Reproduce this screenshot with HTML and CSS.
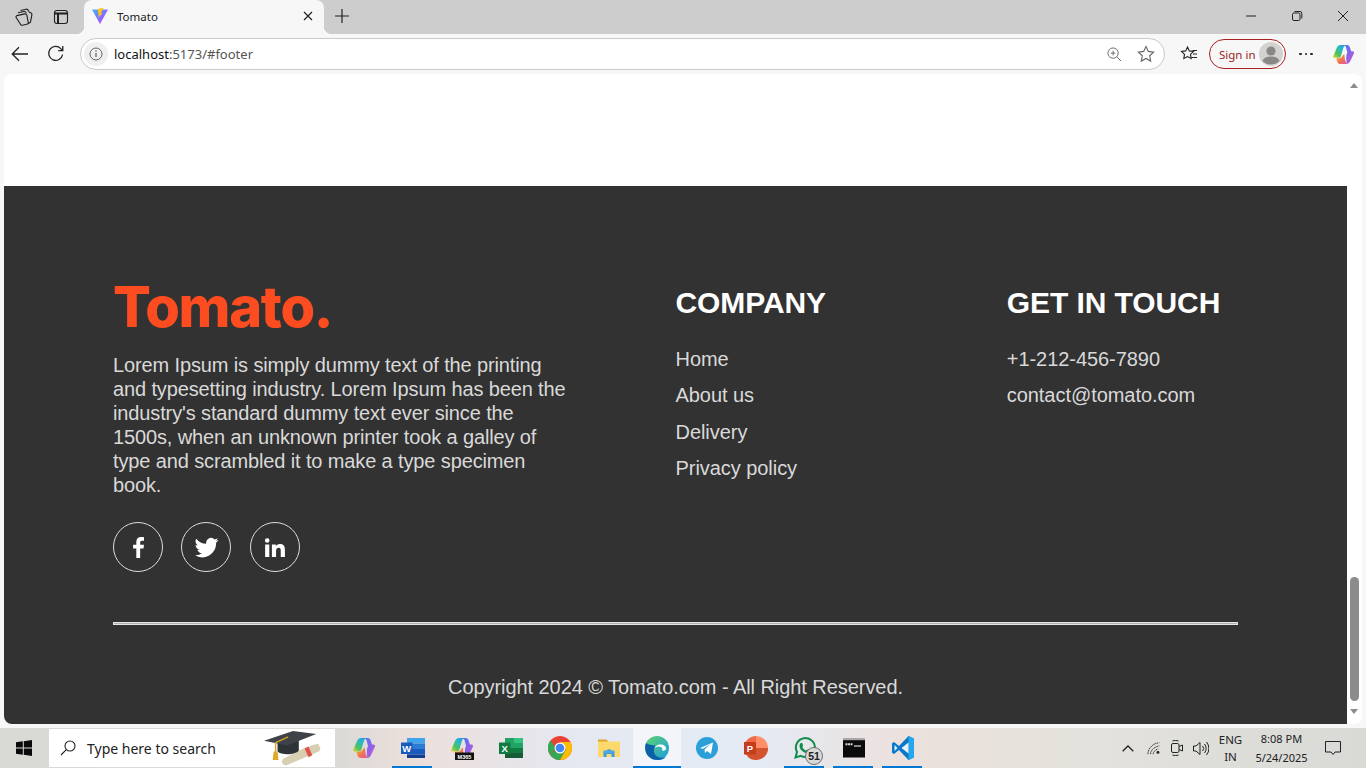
FILE: index.html
```html
<!DOCTYPE html>
<html lang="en">
<head>
<meta charset="utf-8">
<title>Tomato</title>
<link rel="stylesheet" href="styles.css">
</head>
<body>
<div class="screen">
  <header class="tabstrip">
    <div class="tab-tools">
      <svg class="ico" viewBox="0 0 18 18"><path d="M5.500 2.500 11 1.200a2 2 0 0 1 2.300 1.300l.3 1M3 4.800 9 3.500a2 2 0 0 1 2.300 1.400M1.800 7.600l8-1.700a1.800 1.800 0 0 1 2.100 1.400l1.300 7a1.800 1.800 0 0 1-1.400 2l-4.300.9a2 2 0 0 1-2.200-1.200L1.300 9.800a1.600 1.600 0 0 1 .5-2.200Z"/><path d="M13.800 3.800l2.300 1.100a1.500 1.500 0 0 1 .8 1.700l-1.400 7.600-2.300 1.600"/></svg>
      <svg class="ico" viewBox="0 0 18 18"><rect x="2.500" y="2.500" width="13" height="13" rx="2.500"/><path d="M3 5.500h12M6 5.500v10" stroke-width="2"/></svg>
    </div>
    <div class="tab">
      <svg class="favicon" viewBox="0 0 18 18"><defs><linearGradient id="v1" x1="0" y1="0" x2="1" y2="1"><stop offset="0" stop-color="#41b0ff"/><stop offset="1" stop-color="#bd34fe"/></linearGradient></defs><path d="M1 2.500 17 2.500 9 17Z" fill="url(#v1)"/><path d="M10.500 1 6.500 2.200 7.800 9 6.800 11 11.500 6.600 9.800 6.200 12.500 1Z" fill="#ffc517"/></svg>
      <span class="tab-title">Tomato</span>
      <svg class="tab-close" viewBox="0 0 10 10"><path d="M1 1l8 8M9 1 1 9"/></svg>
    </div>
    <svg class="new-tab" viewBox="0 0 14 14"><path d="M7 0v14M0 7h14"/></svg>
    <div class="win-controls">
      <svg class="win-btn" viewBox="0 0 12 12"><path d="M1 6h10"/></svg>
      <svg class="win-btn" viewBox="0 0 12 12"><rect x="1.500" y="3" width="7.500" height="7.500" rx="1.500"/><path d="M3.500 1.500h5.500a1.800 1.800 0 0 1 1.800 1.800V8.500"/></svg>
      <svg class="win-btn" viewBox="0 0 12 12"><path d="M1 1l10 10M11 1 1 11"/></svg>
    </div>
  </header>

  <nav class="toolbar">
    <svg class="nav-ico" viewBox="0 0 18 18"><path d="M17 9H1.500M8 2.200 1.200 9 8 15.800"/></svg>
    <svg class="nav-ico reload" viewBox="0 0 18 18"><path d="M15.600 9.500A7 7 0 1 1 13.800 3.600L15.600 5.400M15.800 1v4.600h-4.600"/></svg>
    <div class="omnibox">
      <span class="info-wrap"><svg class="info" viewBox="0 0 14 14"><circle cx="7" cy="7" r="6"/><path d="M7 6v4M7 3.600v1.200" stroke-width="1.300"/></svg></span>
      <span class="url"><span class="url-host">localhost</span>:5173/#footer</span>
      <svg class="zoom-ico" viewBox="0 0 16 16"><circle cx="6.500" cy="6.500" r="5.500"/><path d="M10.500 10.500 15 15M6.500 4v5M4 6.500h5"/></svg>
      <svg class="star-ico" viewBox="0 0 18 18"><path d="M9 1.500l2.300 4.900 5.300.7-3.900 3.700 1 5.300L9 13.500l-4.700 2.600 1-5.300L1.400 7.100l5.300-.7Z"/></svg>
    </div>
    <svg class="fav-ico" viewBox="0 0 18 18"><path d="M7.500 2l1.800 3.900 4.200.6-3 2.900.7 4.200L7.500 11.600l-3.700 2 .7-4.200-3-2.900 4.200-.6Z"/><path d="M12.500 5.500h4.500M13 9h4M11.500 12.500H17"/></svg>
    <div class="signin">
      <span class="signin-text">Sign in</span>
      <svg class="avatar" viewBox="0 0 24 24"><circle cx="12" cy="12" r="12" fill="#d4d2cf"/><circle cx="12" cy="9" r="4.600" fill="#8a8886"/><path d="M3.500 19c1.500-3.600 4.500-4.500 8.500-4.500s7 .9 8.500 4.500A12 12 0 0 1 3.500 19Z" fill="#8a8886"/></svg>
    </div>
    <div class="more"><i></i><i></i><i></i></div>
    <svg class="copilot-top" viewBox="0 0 24 24"><use href="#copilot"/></svg>
  </nav>

  <div class="window-body">
    <div class="page">
      <main class="viewport">
        <div class="blank"></div>
        <footer class="footer">
          <div class="footer-grid">
            <section class="brand">
              <div class="logo">Tomato.</div>
              <p class="about">Lorem Ipsum is simply dummy text of the printing and typesetting industry. Lorem Ipsum has been the industry's standard dummy text ever since the 1500s, when an unknown printer took a galley of type and scrambled it to make a type specimen book.</p>
              <div class="socials">
                <span class="social"><svg viewBox="0 0 24 24"><path d="M13.600 22v-9h3.200l.5-3.600h-3.700V7.200c0-1 .3-1.800 1.800-1.800h1.900V2.200c-.4 0-1.500-.2-2.800-.2-2.800 0-4.600 1.700-4.600 4.700v2.700H6.800V13h3.100v9Z"/></svg></span>
                <span class="social"><svg viewBox="0 0 24 24"><path d="M23.500 4.900c-.8.400-1.700.6-2.700.8 1-.6 1.700-1.500 2-2.600-.9.500-1.900.9-3 1.100a4.700 4.700 0 0 0-8 4.300A13.400 13.400 0 0 1 2.100 3.600a4.700 4.700 0 0 0 1.500 6.300c-.8 0-1.500-.2-2.100-.6 0 2.300 1.600 4.200 3.800 4.700-.7.200-1.400.2-2.100.1.600 1.900 2.300 3.200 4.400 3.300A9.500 9.500 0 0 1 .6 19.300a13.400 13.400 0 0 0 20.600-11.900c.9-.7 1.700-1.500 2.300-2.500Z"/></svg></span>
                <span class="social"><svg viewBox="0 0 24 24"><path d="M3 9h4v12H3ZM5 3a2.200 2.200 0 1 1 0 4.400A2.200 2.200 0 0 1 5 3ZM9.500 9h3.800v1.700c.6-1 1.900-2 3.900-2 4 0 4.800 2.600 4.800 6V21h-4v-5.600c0-1.400 0-3.100-1.900-3.100s-2.600 1.500-2.600 3V21h-4Z"/></svg></span>
              </div>
            </section>
            <section class="col">
              <h2>COMPANY</h2>
              <ul>
                <li>Home</li>
                <li>About us</li>
                <li>Delivery</li>
                <li>Privacy policy</li>
              </ul>
            </section>
            <section class="col">
              <h2>GET IN TOUCH</h2>
              <ul>
                <li>+1-212-456-7890</li>
                <li>contact@tomato.com</li>
              </ul>
            </section>
          </div>
          <hr class="rule">
          <p class="copyright">Copyright 2024 © Tomato.com - All Right Reserved.</p>
        </footer>
      </main>
      <aside class="scrollbar">
        <span class="arrow-up"></span>
        <span class="thumb"></span>
        <span class="arrow-down"></span>
      </aside>
    </div>
  </div>

  <div class="taskbar">
    <svg class="start" viewBox="0 0 16 16"><path d="M0 2.300 6.800 1.300V7.500H0ZM7.800 1.200 16 0V7.500H7.800ZM0 8.500H6.800V14.700L0 13.700ZM7.800 8.500H16V16L7.800 14.800Z"/></svg>
    <div class="search">
      <svg class="search-ico" viewBox="0 0 16 16"><circle cx="10" cy="6" r="5"/><path d="M6.300 9.700 1 15"/></svg>
      <span class="search-text">Type here to search</span>
      <svg class="grad" viewBox="0 0 60 36">
        <path d="M36 20c8-3 14-6 20-7l2 4c1 3-1 4-3 5L24 35c-2 1-4 0-5-2s0-4 2-5Z" fill="#d8cfb3"/>
        <path d="M42 18l4 9 4-2-4-9Z" fill="#e0524a"/>
        <path d="M14 11v10c4 4 18 4 22-1V10Z" fill="#2e3338"/>
        <path d="M0 10 30 0l24 3L24 15Z" fill="#3d4348"/>
        <path d="M25 6 12 12v10" fill="none" stroke="#d9a520" stroke-width="1.500"/>
        <path d="M10 21h4l1 9h-6Z" fill="#e0a92c"/>
      </svg>
    </div>
    <div class="pins">
      <span class="pin"><svg viewBox="0 0 24 24"><use href="#copilot"/></svg></span>
      <span class="pin open"><svg viewBox="0 0 24 24"><rect x="6" y="2" width="18" height="5.500" fill="#41a5ee"/><rect x="6" y="7.500" width="18" height="5.500" fill="#2b7cd3"/><rect x="6" y="13" width="18" height="5.500" fill="#185abd"/><rect x="6" y="18.500" width="18" height="3.500" fill="#103f91"/><rect x="0" y="6.500" width="11.500" height="11.500" fill="#185abd"/><text class="letter" x="5.700" y="15.800">W</text></svg></span>
      <span class="pin"><svg viewBox="0 0 24 24"><use href="#copilot"/><rect x="5" y="16.500" width="19" height="7.500" fill="#111"/><text class="m365" x="14.500" y="22.500">M365</text></svg></span>
      <span class="pin"><svg viewBox="0 0 24 24"><rect x="6" y="2" width="18" height="20" fill="#21a366"/><rect x="15" y="2" width="9" height="5" fill="#33c481"/><rect x="6" y="12" width="18" height="5" fill="#107c41"/><rect x="6" y="17" width="18" height="5" fill="#185c37"/><rect x="0" y="6.500" width="11.500" height="11.500" fill="#107c41"/><text class="letter" x="5.700" y="15.800">X</text></svg></span>
      <span class="pin"><svg viewBox="0 0 24 24"><circle cx="12" cy="12" r="12" fill="#ea4335"/><path d="M12 12 1.600 18A12 12 0 0 0 12 24l6-10Z" fill="#34a853"/><path d="M12 6h10.400A12 12 0 0 1 12 24l6-10.500Z" fill="#fbbc04"/><path d="M1.600 18A12 12 0 0 1 2.800 4.300L8 13Z" fill="#34a853"/><circle cx="12" cy="12" r="5.500" fill="#fff"/><circle cx="12" cy="12" r="4.300" fill="#4285f4"/></svg></span>
      <span class="pin"><svg viewBox="0 0 24 24"><path d="M1 3.500h8.500l2 2.500H1Z" fill="#e0a32e"/><rect x="1" y="5.500" width="22" height="15.500" fill="#fcd96b"/><path d="M6.500 21v-5l5.500-3 5.500 3v5h-3v-3h-5v3Z" fill="#3a9be0"/><rect x="6.500" y="14.500" width="11" height="2.500" fill="#4fa9ea"/></svg></span>
      <span class="pin active"><svg viewBox="0 0 24 24"><defs><linearGradient id="e1" x1="0" y1="0" x2="1" y2="1"><stop offset="0" stop-color="#5fd46a"/><stop offset="1" stop-color="#1b9de2"/></linearGradient></defs><circle cx="12" cy="12" r="12" fill="url(#e1)"/><path d="M1 7c-3 9 3 17 12 17 3 0 6-1 8-3-5 2-11 0-12-5-.6-3 1-5 3-6-4-1-8-1-11-3Z" fill="#0c5fa8"/><path d="M9.500 13c0-3 3-4.500 6-4.500 3.500 0 5.500 1.800 5.500 4 0 1.800-2 2.500-4 2 .6-1 .5-2.500-1-3.500-2.500-1.400-6.500 0-6.500 2Z" fill="#fff"/></svg></span>
      <span class="pin"><svg viewBox="0 0 24 24"><circle cx="12" cy="12" r="11" fill="#2a9fd8"/><path d="M5 12 18 6.500 16 18l-4-3-2 2-.5-3.500 6-5.500-7.500 4.700Z" fill="#fff"/></svg></span>
      <span class="pin"><svg viewBox="0 0 24 24"><path d="M12 12V0a12 12 0 0 1 12 12Z" fill="#ff8f6b"/><path d="M12 0A12 12 0 1 0 24 12H12Z" fill="#ed6c47"/><path d="M12 24A12 12 0 0 1 4 21V12h20A12 12 0 0 1 12 24Z" fill="#d35230"/><rect x="0" y="6" width="12" height="12.500" fill="#c43e1c"/><text class="letter" x="6" y="16">P</text></svg></span>
      <span class="pin wa"><svg viewBox="0 0 24 24"><path d="M2.500 21.500 4 16a9.500 9.500 0 1 1 3.700 3.800Z" fill="none" stroke="#128c4b" stroke-width="2"/><path d="M8.500 6.800c1 0 1.300 2.300 1.600 3 0 .7-1 1-.6 1.700a8 8 0 0 0 3.200 2.900c.8.300 1-.9 1.800-.8.700.2 2 1 2.500 1.300.2 1.400-1.200 2.300-2.600 2.300-4 0-7.900-4-7.900-7.200 0-1.500 1-3.200 2-3.200Z" fill="#128c4b"/></svg><span class="badge">51</span></span>
      <span class="pin open"><svg viewBox="0 0 24 24"><rect x="1" y="2" width="22" height="19.500" fill="#0b0b0b"/><rect x="1" y="2" width="22" height="2.200" fill="#a8a8a8"/><path d="M3.500 8.200h7" stroke="#ddd" stroke-width="2" stroke-dasharray="2 .6"/><path d="M12 10h7" stroke="#ddd" stroke-width="1.200"/></svg></span>
      <span class="pin open"><svg viewBox="0 0 24 24"><path d="M17.500 0 8 10 3 6 1 7.200v9.600L3 18l5-4 9.500 10L23 21.500V2.500Z" fill="#0a78c8"/><path d="M17.500 0 23 2.500v19L17.500 24Z" fill="#24a7ef"/><path d="M17.500 6.500 10.500 12l7 5.500Z" fill="#e9f0f6"/><path d="M3.500 9 6.500 12l-3 3Z" fill="#e9f0f6"/></svg></span>
    </div>
    <div class="tray">
      <svg class="tray-ico chevron" viewBox="0 0 12 7"><path d="M.7 6.300 6 1l5.300 5.300"/></svg>
      <svg class="tray-ico wifi" viewBox="0 0 16 16"><path d="M1 15C1.500 8 7 2.500 14 2M4 15c.5-4.800 4-8 10-9.500M7 15c.3-3 3-5.300 6-6" stroke-dasharray="2 .8"/><circle cx="12.500" cy="13" r="1.700" fill="#222" stroke="none"/></svg>
      <svg class="tray-ico cam" viewBox="0 0 12 16"><rect x=".5" y="3.500" width="7.500" height="9" rx="1.500"/><path d="M8 6.500 11.500 5v6L8 9.500M1.500 1c2-.7 4-.7 6 0M1.500 15c2 .7 4 .7 6 0"/></svg>
      <svg class="tray-ico vol" viewBox="0 0 16 15"><path d="M.5 5h2.500L7 1.500v12L3 10H.5ZM9.500 5a3.500 3.500 0 0 1 0 5M11.500 3a7 7 0 0 1 0 9M13.500 1a10 10 0 0 1 0 13"/></svg>
      <div class="lang"><span>ENG</span><span>IN</span></div>
      <div class="clock"><span>8:08 PM</span><span>5/24/2025</span></div>
      <svg class="tray-ico notif" viewBox="0 0 16 15"><path d="M.5.500h15v10.500h-5.500L8 13.500 6 11H.5Z"/></svg>
    </div>
  </div>
</div>

<svg class="defs" width="0" height="0">
  <defs>
    <linearGradient id="cp1" x1="1" y1="0" x2="0" y2="1"><stop offset="0" stop-color="#2f7ff0"/><stop offset=".35" stop-color="#25b9c9"/><stop offset=".7" stop-color="#4fc35a"/><stop offset="1" stop-color="#f2d530"/></linearGradient>
    <linearGradient id="cp2" x1="0" y1="0" x2="1" y2="1"><stop offset="0" stop-color="#3f7ff0"/><stop offset=".5" stop-color="#8a63ea"/><stop offset="1" stop-color="#dd55c4"/></linearGradient>
    <linearGradient id="cp3" x1="0" y1="0" x2="1" y2="1"><stop offset="0" stop-color="#f6c52c"/><stop offset=".5" stop-color="#f2794e"/><stop offset="1" stop-color="#e3509c"/></linearGradient>
    <g id="copilot">
      <path d="M15.500 2C17.500 2 18.300 3.200 18.800 5L20 8.500H21.500C23 8.500 23.400 9.700 22.800 10.900L19.500 18C18.500 20.500 17 22 15 22C16 21 13.500 15 16 10L15 6C14.700 4 14 3 12.500 2.600C13.500 2 14.500 2 15.500 2Z" fill="url(#cp2)"/>
      <path d="M4.500 15.800H7C9.500 15.800 10.500 14.500 11 13L13 11.500C13 17 14 19 15.500 22H9C7 22 6 21 5.300 19Z" fill="url(#cp3)"/>
      <path d="M9 2H15C13 2 12.300 3.500 11.700 5.500L9.500 13C9 15 8 15.500 6 15.500H2.500C1.500 15.500 1 14.700 1.300 13.700L5 5C6 3 7 2 9 2Z" fill="url(#cp1)"/>
    </g>
  </defs>
</svg>
</body>
</html>
```

FILE: styles.css
```css
* { box-sizing: border-box; }
html, body { margin: 0; padding: 0; height: 100%; overflow: hidden; }
body { font-family: "Liberation Sans", Arial, sans-serif; background: #f7f7f7; }
svg { display: block; flex: none; }
.defs { position: absolute; }
.screen { width: 1366px; height: 768px; display: flex; flex-direction: column; }

.tabstrip { height: 34px; background: #cdcdcd; display: flex; align-items: center; flex: none; }
.ico { width: 18px; height: 18px; fill: none; stroke: #1f1f1f; stroke-width: 1.100; }
.tab-tools { width: 84px; display: flex; gap: 19px; padding: 0 0 1px 15px; }
.tab { width: 240px; height: 34px; background: #f7f7f7; border-radius: 8px 8px 0 0; display: flex; align-items: center; padding: 0 11px 2px 7px; align-self: flex-end; position: relative; }
.tab::before, .tab::after { content: ""; position: absolute; bottom: 0; width: 8px; height: 8px; }
.tab::before { left: -8px; background: radial-gradient(circle at 0 0, #cdcdcd 8px, #f7f7f7 8.500px); }
.tab::after { right: -8px; background: radial-gradient(circle at 100% 0, #cdcdcd 8px, #f7f7f7 8.500px); }
.favicon { width: 18px; height: 18px; }
.tab-title { margin-left: 8px; font: 11.500px "Noto Sans", "Open Sans", sans-serif; color: #1a1a1a; flex: 1; }
.tab-close { width: 10px; height: 10px; fill: none; stroke: #222; stroke-width: 1.200; }
.new-tab { width: 14px; height: 14px; margin: 0 0 2px 11px; fill: none; stroke: #222; stroke-width: 1.200; }
.win-controls { margin-left: auto; display: flex; gap: 34px; padding: 0 17px 2px 0; }
.win-btn { width: 12px; height: 12px; fill: none; stroke: #222; stroke-width: 1; }

.toolbar { height: 40px; background: #f7f7f7; display: flex; align-items: center; flex: none; padding: 0 0 0 11px; }
.nav-ico { width: 18px; height: 18px; fill: none; stroke: #222; stroke-width: 1.300; }
.reload { margin-left: 18px; }
.omnibox { width: 1085px; height: 32px; margin-left: 15px; background: #fff; border: 1px solid #c9c9c9; border-radius: 16px; display: flex; align-items: center; padding: 0 9px 0 3px; }
.info-wrap { width: 24px; height: 24px; border-radius: 50%; background: #efefef; display: flex; align-items: center; justify-content: center; }
.info { width: 14px; height: 14px; fill: none; stroke: #666; stroke-width: 1; }
.url { margin-left: 6px; font: 13px "Noto Sans", "Open Sans", sans-serif; color: #555; flex: 1; }
.url-host { color: #111; }
.zoom-ico { width: 15px; height: 15px; fill: none; stroke: #666; stroke-width: 1; }
.star-ico { width: 18px; height: 18px; margin-left: 15px; fill: none; stroke: #666; stroke-width: 1.100; }
.fav-ico { width: 18px; height: 18px; margin-left: 15px; fill: none; stroke: #222; stroke-width: 1.100; }
.signin { width: 77px; height: 30px; margin-left: 11px; border: 1px solid #a8201f; border-radius: 15px; display: flex; align-items: center; padding: 0 2px 0 9px; justify-content: space-between; }
.signin-text { font: 11.500px "Noto Sans", "Open Sans", sans-serif; color: #9b1c1c; }
.avatar { width: 24px; height: 24px; }
.more { display: flex; gap: 3px; margin-left: 13px; }
.more i { display: block; width: 2.500px; height: 2.500px; background: #222; border-radius: 50%; }
.copilot-top { width: 23px; height: 23px; margin-left: 19px; }

.window-body { flex: 1; padding: 0 4px; min-height: 0; }
.page { height: 650px; display: flex; background: #fff; border-radius: 8px; overflow: hidden; }
.viewport { width: 1343px; height: 650px; display: flex; flex-direction: column; }
.blank { height: 112px; flex: none; }
.footer { flex: 1; background: #323232; color: #d9d9d9; padding: 100px 109px 0; display: flex; flex-direction: column; }
.footer-grid { display: grid; grid-template-columns: 2fr 1fr 1fr; column-gap: 100px; }
.logo { font: 800 56px/42px Inter, sans-serif; color: #fd4c20; letter-spacing: -1.300px; }
.about { margin: 25px 0 0; font-size: 20px; line-height: 24px; letter-spacing: -0.125px; }
.socials { display: flex; gap: 18.400px; margin-top: 25px; }
.social { width: 50px; height: 50px; border: 1.500px solid #dedede; border-radius: 50%; display: flex; align-items: center; justify-content: center; }
.social svg { width: 25px; height: 25px; fill: #fff; }
.col h2 { margin: 0; font-size: 30px; line-height: 34px; font-weight: 700; color: #fff; letter-spacing: -0.08px; }
.col ul { list-style: none; margin: 28px 0 0; padding: 0; display: flex; flex-direction: column; gap: 13px; }
.col li { font-size: 20px; line-height: 23.400px; letter-spacing: -0.05px; }
.rule { height: 3px; width: 100%; margin: 50px 0 0; border: 1px solid #e6e6e6; background: #b0b0b0; }
.copyright { margin: 50px 0 0; text-align: center; font-size: 20px; line-height: 24px; letter-spacing: -0.06px; }

.scrollbar { width: 15px; height: 650px; background: #fff; display: flex; flex-direction: column; align-items: center; padding-right: 1px; }
.arrow-up { width: 0; height: 0; margin-top: 9px; border: 4.500px solid transparent; border-top: 0; border-bottom: 5px solid #8c8c8c; }
.thumb { width: 9px; height: 124px; margin-top: 489px; background: #8c8c8c; border-radius: 5px; }
.arrow-down { width: 0; height: 0; margin-top: 8px; border: 4.500px solid transparent; border-bottom: 0; border-top: 5px solid #8c8c8c; }

.taskbar { height: 40px; flex: none; display: flex; align-items: flex-end; background: linear-gradient(90deg, #d9d9d6 0, #dbdad7 25%, #ecdfda 30%, #e5e8f1 42%, #e4ebf5 55%, #ece1dd 66%, #e3e2dc 80%, #d9d9d6 100%); }
.start { width: 16px; height: 16px; margin: 0 0 12px 16px; fill: #0a0a0a; }
.search { width: 286px; height: 38px; margin: 0 0 1px 17px; background: #fff; display: flex; align-items: center; padding-left: 11px; position: relative; }
.search-ico { width: 16px; height: 16px; fill: none; stroke: #222; stroke-width: 1.100; }
.search-text { margin-left: 11px; font: 14px "Noto Sans", "Open Sans", sans-serif; color: #222; }
.grad { position: absolute; right: 13px; top: 2px; width: 58px; height: 35px; }
.pins { display: flex; margin-left: 4px; height: 40px; }
.pin { width: 49px; height: 40px; padding-top: 8px; display: flex; justify-content: center; position: relative; }
.pin svg { width: 24px; height: 24px; }
.pin.open::after, .pin.wa::after { content: ""; position: absolute; left: 4px; right: 5px; bottom: 0; height: 2px; background: #0078d4; }
.pin.active { background: #f3f5fb; width: 48px; margin-right: 1px; }
.pin.active::after { content: ""; position: absolute; left: 0; right: 0; bottom: 0; height: 2px; background: #0078d4; }
.letter { font: 700 9.500px "Liberation Sans", sans-serif; fill: #fff; text-anchor: middle; }
.m365 { font: 700 5.500px "Liberation Sans", sans-serif; fill: #fff; text-anchor: middle; }
.badge { position: absolute; left: 25px; top: 19px; width: 18px; height: 18px; border-radius: 50%; background: #d8d8d8; border: 1px solid #6e6e6e; font: 700 10.500px/16px "Liberation Sans", sans-serif; color: #222; text-align: center; }
.tray { margin-left: auto; height: 40px; display: flex; align-items: center; padding-right: 25px; color: #222; }
.tray-ico { fill: none; stroke: #222; stroke-width: 1; }
.chevron { width: 12px; height: 7px; stroke-width: 1.300; }
.wifi { width: 14px; height: 14px; margin-left: 13px; }
.cam { width: 12px; height: 16px; margin-left: 10px; }
.vol { width: 16px; height: 15px; margin-left: 10px; }
.lang { width: 26px; margin-left: 8.500px; display: flex; flex-direction: column; align-items: center; font: 11.500px/17px "Noto Sans", "Open Sans", sans-serif; }
.clock { width: 60px; margin-left: 8px; display: flex; flex-direction: column; align-items: center; font: 11px/19px "Noto Sans", "Open Sans", sans-serif; }
.notif { width: 16px; height: 15px; margin-left: 13.500px; }
```
